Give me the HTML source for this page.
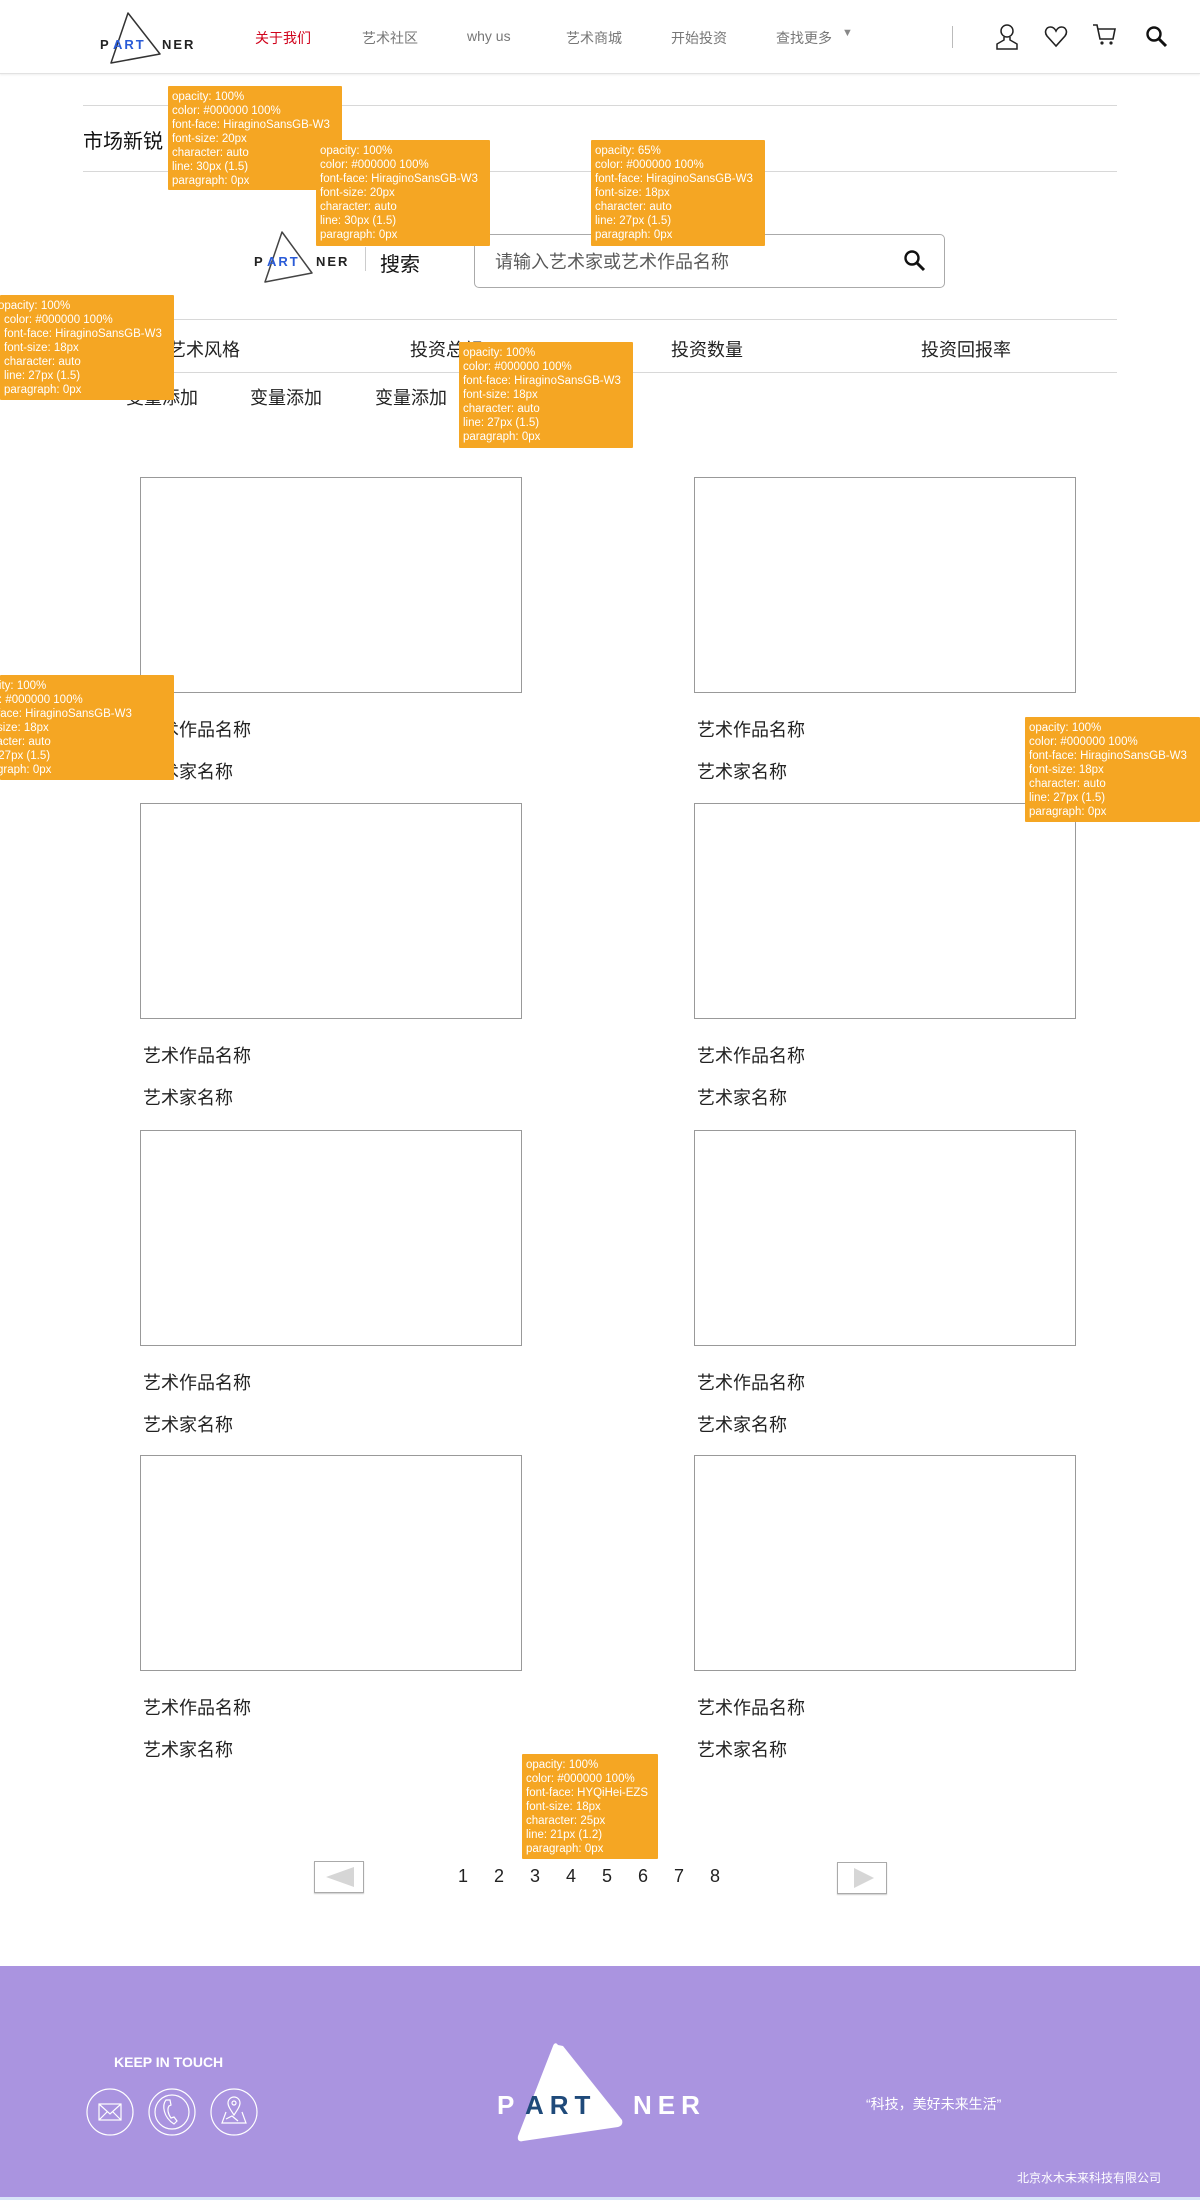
<!DOCTYPE html>
<html><head><meta charset="utf-8"><style>
*{margin:0;padding:0;box-sizing:border-box}
body{width:1200px;height:2200px;position:relative;background:#fff;font-family:"Liberation Sans","Noto Sans CJK SC",sans-serif;color:#222;overflow:hidden}
.a{position:absolute;white-space:nowrap}
.nav{font-size:14px;color:#777;top:28px}
.hr{position:absolute;left:83px;width:1034px;height:1px;background:#d8d8d8}
.box{position:absolute;width:382px;height:216px;border:1px solid #999}
.t{position:absolute;font-size:18px;color:#222}
.tip{position:absolute;background:#f5a623;color:#fff;font-size:11.5px;line-height:14px;padding:4px 4px;white-space:nowrap;overflow:hidden;border-radius:1px}
.pg{position:absolute;top:1866px;font-size:18px;color:#222}
</style></head><body>
<div style="position:absolute;left:0;top:0;width:1200px;height:74px;border-bottom:1px solid #e2e2e2;box-shadow:0 1px 2px #eee"></div>
<svg class="a" style="left:96px;top:8px" width="110" height="60" viewBox="0 0 110 60">
<path d="M32 5 L15 55 L64 46 Z" fill="none" stroke="#333" stroke-width="1.5" stroke-linejoin="round"/>
<text x="4" y="41" font-family="Liberation Sans" font-weight="bold" font-size="13" fill="#222" letter-spacing="2">P</text>
<text x="17" y="41" font-family="Liberation Sans" font-weight="bold" font-size="13" fill="#2a5bd7" letter-spacing="2">ART</text>
<text x="66" y="41" font-family="Liberation Sans" font-weight="bold" font-size="13" fill="#222" letter-spacing="2">NER</text>
</svg>
<div class="a nav" style="left:255px;color:#d0021b">关于我们</div>
<div class="a nav" style="left:362px">艺术社区</div>
<div class="a nav" style="left:467px">why us</div>
<div class="a nav" style="left:566px">艺术商城</div>
<div class="a nav" style="left:671px">开始投资</div>
<div class="a nav" style="left:776px">查找更多</div>
<div class="a" style="left:842px;top:27px;font-size:11px;color:#888">▼</div>
<div class="a" style="left:952px;top:26px;width:1px;height:22px;background:#bbb"></div>
<svg class="a" style="left:994px;top:23px" width="26" height="28" viewBox="0 0 26 28"><circle cx="13" cy="8" r="6" fill="none" stroke="#222" stroke-width="1.5"/><path d="M10 14 L10 17 L3 21 L3 26 L23 26 L23 21 L16 17 L16 14" fill="none" stroke="#222" stroke-width="1.5"/></svg>
<svg class="a" style="left:1044px;top:26px" width="24" height="22" viewBox="0 0 24 22"><path d="M12 20 L3 10 C0 6 2 1 6.5 1 C9 1 11 3 12 5 C13 3 15 1 17.5 1 C22 1 24 6 21 10 Z" fill="none" stroke="#222" stroke-width="1.6"/></svg>
<svg class="a" style="left:1092px;top:22px" width="26" height="26" viewBox="0 0 26 26"><path d="M1 3 L5 3 L8 17 L21 17 L23 7 L6 7" fill="none" stroke="#222" stroke-width="1.6"/><circle cx="10" cy="21" r="1.6" fill="#222"/><circle cx="19" cy="21" r="1.6" fill="#222"/></svg>
<svg class="a" style="left:1145px;top:25px" width="24" height="24" viewBox="0 0 24 24"><circle cx="9" cy="9" r="6.5" fill="none" stroke="#111" stroke-width="2.4"/><path d="M14 14 L21 21" stroke="#111" stroke-width="3"/></svg>

<div class="hr" style="top:105px"></div>
<div class="a" style="left:83px;top:125px;font-size:20px;color:#111">市场新锐</div>
<div class="hr" style="top:171px"></div>

<svg class="a" style="left:250px;top:228px" width="110" height="60" viewBox="0 0 110 60">
<path d="M32 4 L15 54 L62 45 Z" fill="none" stroke="#444" stroke-width="1.5" stroke-linejoin="round"/>
<text x="4" y="38" font-family="Liberation Sans" font-weight="bold" font-size="13" fill="#222" letter-spacing="2">P</text>
<text x="17" y="38" font-family="Liberation Sans" font-weight="bold" font-size="13" fill="#2a5bd7" letter-spacing="2">ART</text>
<text x="66" y="38" font-family="Liberation Sans" font-weight="bold" font-size="13" fill="#222" letter-spacing="2">NER</text>
</svg>
<div class="a" style="left:365px;top:247px;width:1px;height:24px;background:#ccc"></div>
<div class="a" style="left:380px;top:248px;font-size:20px;color:#111">搜索</div>
<div class="a" style="left:474px;top:234px;width:471px;height:54px;border:1.5px solid #aaa;border-radius:5px"></div>
<div class="a" style="left:495px;top:248px;font-size:18px;color:#000;opacity:.65">请输入艺术家或艺术作品名称</div>
<svg class="a" style="left:903px;top:249px" width="24" height="24" viewBox="0 0 24 24"><circle cx="9" cy="9" r="6.5" fill="none" stroke="#111" stroke-width="2.4"/><path d="M14 14 L21 21" stroke="#111" stroke-width="3"/></svg>

<div class="hr" style="top:319px"></div>
<div class="t" style="left:168px;top:336px">艺术风格</div>
<div class="t" style="left:410px;top:336px">投资总额</div>
<div class="t" style="left:671px;top:336px">投资数量</div>
<div class="t" style="left:921px;top:336px">投资回报率</div>
<div class="hr" style="top:372px"></div>
<div class="t" style="left:126px;top:384px">变量添加</div>
<div class="t" style="left:250px;top:384px">变量添加</div>
<div class="t" style="left:375px;top:384px">变量添加</div>

<div class="box" style="left:140px;top:477px"></div><div class="box" style="left:694px;top:477px"></div>
<div class="t" style="left:143px;top:716px">艺术作品名称</div><div class="t" style="left:697px;top:716px">艺术作品名称</div>
<div class="t" style="left:143px;top:758px">艺术家名称</div><div class="t" style="left:697px;top:758px">艺术家名称</div>

<div class="box" style="left:140px;top:803px"></div><div class="box" style="left:694px;top:803px"></div>
<div class="t" style="left:143px;top:1042px">艺术作品名称</div><div class="t" style="left:697px;top:1042px">艺术作品名称</div>
<div class="t" style="left:143px;top:1084px">艺术家名称</div><div class="t" style="left:697px;top:1084px">艺术家名称</div>

<div class="box" style="left:140px;top:1130px"></div><div class="box" style="left:694px;top:1130px"></div>
<div class="t" style="left:143px;top:1369px">艺术作品名称</div><div class="t" style="left:697px;top:1369px">艺术作品名称</div>
<div class="t" style="left:143px;top:1411px">艺术家名称</div><div class="t" style="left:697px;top:1411px">艺术家名称</div>

<div class="box" style="left:140px;top:1455px"></div><div class="box" style="left:694px;top:1455px"></div>
<div class="t" style="left:143px;top:1694px">艺术作品名称</div><div class="t" style="left:697px;top:1694px">艺术作品名称</div>
<div class="t" style="left:143px;top:1736px">艺术家名称</div><div class="t" style="left:697px;top:1736px">艺术家名称</div>

<div class="a" style="left:314px;top:1861px;width:50px;height:32px;border:1px solid #aaa;box-shadow:0 1px 1px #ccc"></div>
<div class="a" style="left:326px;top:1867px;width:0;height:0;border-top:10px solid transparent;border-bottom:10px solid transparent;border-right:28px solid #d6d6d6"></div>
<div class="a" style="left:837px;top:1862px;width:50px;height:32px;border:1px solid #aaa;box-shadow:0 1px 1px #ccc"></div>
<div class="a" style="left:854px;top:1868px;width:0;height:0;border-top:10px solid transparent;border-bottom:10px solid transparent;border-left:20px solid #d6d6d6"></div>
<div class="pg" style="left:458px">1</div><div class="pg" style="left:494px">2</div><div class="pg" style="left:530px">3</div><div class="pg" style="left:566px">4</div><div class="pg" style="left:602px">5</div><div class="pg" style="left:638px">6</div><div class="pg" style="left:674px">7</div><div class="pg" style="left:710px">8</div>

<div class="a" style="left:0;top:1966px;width:1200px;height:231px;background:#aa94e0"></div>
<div class="a" style="left:0;top:2197px;width:1200px;height:3px;background:#d8e4f8"></div>
<div class="a" style="left:114px;top:2054px;font-size:14px;font-weight:bold;color:#fff">KEEP IN TOUCH</div>
<svg class="a" style="left:86px;top:2087px" width="172" height="50" viewBox="0 0 172 50">
<g fill="none" stroke="#fff" stroke-width="1.2">
<circle cx="24" cy="25" r="23"/><rect x="13" y="17" width="22" height="16"/><path d="M13 17 L24 27 L35 17 M13 33 L21 25 M35 33 L27 25"/>
<circle cx="86" cy="25" r="23"/><circle cx="86" cy="25" r="17"/><path d="M80 13 C76 18 77 30 88 37 L91 34 L88 30 L85 31 C82 27 81 22 83 19 L85 18 L84 13 Z"/>
<circle cx="148" cy="25" r="23"/><path d="M148 28 C144 22 142 19 142 16 A6 6 0 0 1 154 16 C154 19 152 22 148 28 Z"/><circle cx="148" cy="16" r="2"/><path d="M140 25 L136 36 L160 36 L156 25 M140 32 L146 29 L152 34"/>
</g></svg>
<svg class="a" style="left:490px;top:2040px" width="230" height="106" viewBox="0 0 230 106">
<path d="M68 5 C66 2 64 3 63 6 L28 96 C27 101 30 102 33 101 L128 87 C132 86 133 83 132 80 L73 6 Z" fill="#fff"/>
<text x="7" y="74" font-family="Liberation Sans" font-weight="bold" font-size="26" fill="#fff" letter-spacing="6">P</text>
<text x="35" y="74" font-family="Liberation Sans" font-weight="bold" font-size="26" fill="#1f4a7a" letter-spacing="6">ART</text>
<text x="143" y="74" font-family="Liberation Sans" font-weight="bold" font-size="26" fill="#fff" letter-spacing="6">NER</text>
</svg>
<div class="a" style="left:866px;top:2094px;font-size:14px;color:#fff">“科技，美好未来生活”</div>
<div class="a" style="left:1017px;top:2169px;font-size:12px;color:#fff">北京水木未来科技有限公司</div>

<div class="tip" style="left:168px;top:86px;width:174px;height:104px">opacity: 100%<br>color: #000000 100%<br>font-face: HiraginoSansGB-W3<br>font-size: 20px<br>character: auto<br>line: 30px (1.5)<br>paragraph: 0px</div>
<div class="tip" style="left:316px;top:140px;width:174px;height:106px">opacity: 100%<br>color: #000000 100%<br>font-face: HiraginoSansGB-W3<br>font-size: 20px<br>character: auto<br>line: 30px (1.5)<br>paragraph: 0px</div>
<div class="tip" style="left:591px;top:140px;width:174px;height:106px">opacity: 65%<br>color: #000000 100%<br>font-face: HiraginoSansGB-W3<br>font-size: 18px<br>character: auto<br>line: 27px (1.5)<br>paragraph: 0px</div>
<div class="tip" style="left:0;top:295px;width:174px;height:105px;text-indent:-6px">opacity: 100%<br>color: #000000 100%<br>font-face: HiraginoSansGB-W3<br>font-size: 18px<br>character: auto<br>line: 27px (1.5)<br>paragraph: 0px</div>
<div class="tip" style="left:459px;top:342px;width:174px;height:106px">opacity: 100%<br>color: #000000 100%<br>font-face: HiraginoSansGB-W3<br>font-size: 18px<br>character: auto<br>line: 27px (1.5)<br>paragraph: 0px</div>
<div class="tip" style="left:0;top:675px;width:174px;height:105px;padding-left:0"><div style="margin-left:-26px">opacity: 100%<br>color: #000000 100%<br>font-face: HiraginoSansGB-W3<br>font-size: 18px<br>character: auto<br>line: 27px (1.5)<br>paragraph: 0px</div></div>
<div class="tip" style="left:1025px;top:717px;width:175px;height:105px">opacity: 100%<br>color: #000000 100%<br>font-face: HiraginoSansGB-W3<br>font-size: 18px<br>character: auto<br>line: 27px (1.5)<br>paragraph: 0px</div>
<div class="tip" style="left:522px;top:1754px;width:136px;height:105px">opacity: 100%<br>color: #000000 100%<br>font-face: HYQiHei-EZS<br>font-size: 18px<br>character: 25px<br>line: 21px (1.2)<br>paragraph: 0px</div>
</body></html>
